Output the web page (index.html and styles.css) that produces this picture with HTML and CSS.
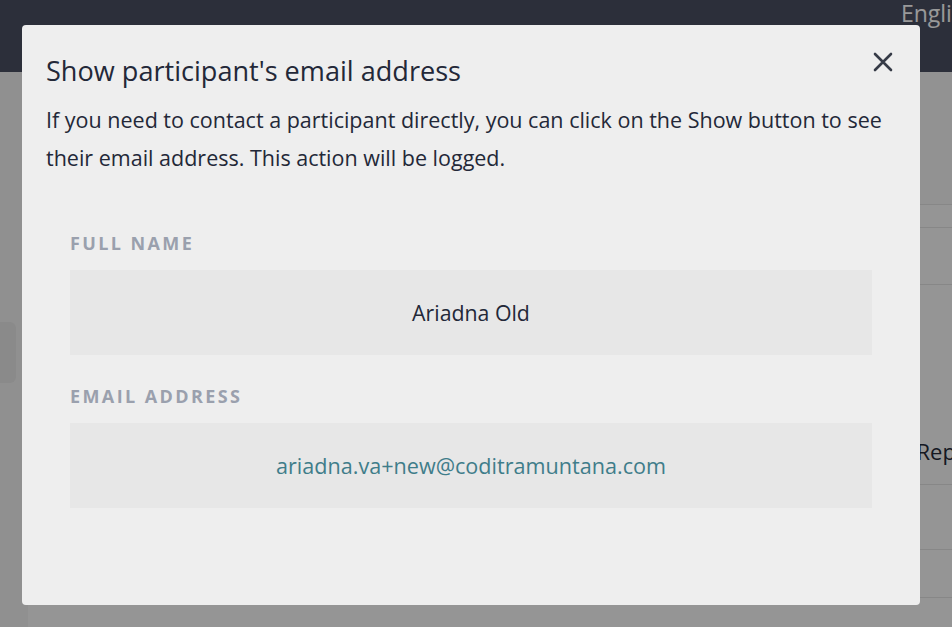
FILE: index.html
```html
<!DOCTYPE html>
<html lang="en">
<head>
    <meta charset="UTF-8">
    <title>Participants</title>
    <link rel="stylesheet" href="styles.css">
</head>
<body>
<div class="page">
    <div class="topbar">
        <span class="lang">English</span>
    </div>
    <div class="main">
        <div class="sidebar">
            <div class="side-item"></div>
        </div>
        <div class="content">
            <div class="panel"></div>
            <div class="table">
                <div class="row"></div>
                <div class="row tall"><span class="cell">Report</span></div>
                <div class="row mid"></div>
                <div class="row short"></div>
            </div>
        </div>
    </div>
</div>

<!--弹窗遮罩-->
<div class="backdrop">
    <div class="modal">
        <button class="close" type="button" aria-label="Close">
            <svg width="20" height="20" viewBox="0 0 20 20">
                <path d="M2 2 L18 18 M18 2 L2 18" stroke="#363b47" stroke-width="2.6" stroke-linecap="round"/>
            </svg>
        </button>
        <h2 class="modal-title">Show participant's email address</h2>
        <p class="modal-text">If you need to contact a participant directly, you can click on the Show button to see their email address. This action will be logged.</p>
        <div class="fields">
            <div class="field">
                <div class="label">Full name</div>
                <div class="value">Ariadna Old</div>
            </div>
            <div class="field">
                <div class="label">Email address</div>
                <div class="value email">ariadna.va+new@coditramuntana.com</div>
            </div>
        </div>
    </div>
</div>
</body>
</html>
```

FILE: styles.css
```css
* {
    margin: 0;
    padding: 0;
    box-sizing: border-box;
}

html, body {
    height: 100%;
}

body {
    font-family: "Open Sans", "Noto Sans", sans-serif;
    color: #232838;
    background-color: #f8f8f8;
    overflow: hidden;
}

/* 背景页面 */
.page {
    height: 100%;
    display: flex;
    flex-direction: column;
    overflow: hidden;
}

.topbar {
    height: 72px;
    background-color: #4a4f62;
    display: flex;
    justify-content: flex-end;
    overflow: hidden;
}

.lang {
    color: #fff;
    font-size: 23px;
    line-height: 26px;
    margin-right: -25px;
}

.main {
    flex: 1;
    display: flex;
}

.sidebar {
    width: 28px;
    background-color: #f1f1f1;
    padding-top: 250px;
}

.side-item {
    width: 16px;
    height: 61px;
    background-color: #e6e6e6;
    border-radius: 0 6px 6px 0;
}

.content {
    flex: 1;
    display: flex;
    flex-direction: column;
    overflow: hidden;
}

.panel {
    height: 133px;
    background-color: #f4f4f4;
    border-bottom: 1px solid #e2e2e2;
}

.table {
    margin-top: 22px;
    border-top: 1px solid #e2e2e2;
}

.row {
    height: 57px;
    border-bottom: 1px solid #e2e2e2;
}

.row.tall {
    height: 200px;
    display: flex;
    align-items: flex-end;
    justify-content: flex-end;
    padding-bottom: 18px;
}

.row.mid {
    height: 65px;
}

.row.short {
    height: 48px;
}

.cell {
    font-size: 22px;
    line-height: 30px;
    margin-right: -34px;
}

/* 遮罩 */
.backdrop {
    position: fixed;
    top: 0;
    left: 0;
    right: 0;
    bottom: 0;
    background-color: rgba(0, 0, 0, .4);
}

.modal {
    position: relative;
    width: 898px;
    height: 580px;
    margin: 25px 0 0 22px;
    background-color: #eeeeee;
    border-radius: 4px;
    padding: 24px 24px 0 24px;
}

.close {
    position: absolute;
    top: 27px;
    right: 27px;
    border: none;
    background: none;
    width: 20px;
    height: 20px;
    cursor: pointer;
}

.close svg {
    display: block;
}

.modal-title {
    font-weight: normal;
    font-size: 27.1px;
    line-height: 44px;
    color: #232838;
}

.modal-text {
    margin-top: 8px;
    font-size: 21.5px;
    line-height: 38px;
    color: #232838;
}

.fields {
    padding: 0 24px;
    margin-top: 54px;
    display: flex;
    flex-direction: column;
    gap: 29px;
}

.label {
    font-size: 18px;
    font-weight: bold;
    letter-spacing: 2.4px;
    text-transform: uppercase;
    color: #9aa0ad;
    line-height: 24px;
    margin-bottom: 15px;
}

.value {
    height: 85px;
    background-color: #e7e7e7;
    display: flex;
    align-items: center;
    justify-content: center;
    font-size: 21.3px;
    color: #232838;
}

.value.email {
    font-size: 21.6px;
    color: #3f7d8a;
}
```
